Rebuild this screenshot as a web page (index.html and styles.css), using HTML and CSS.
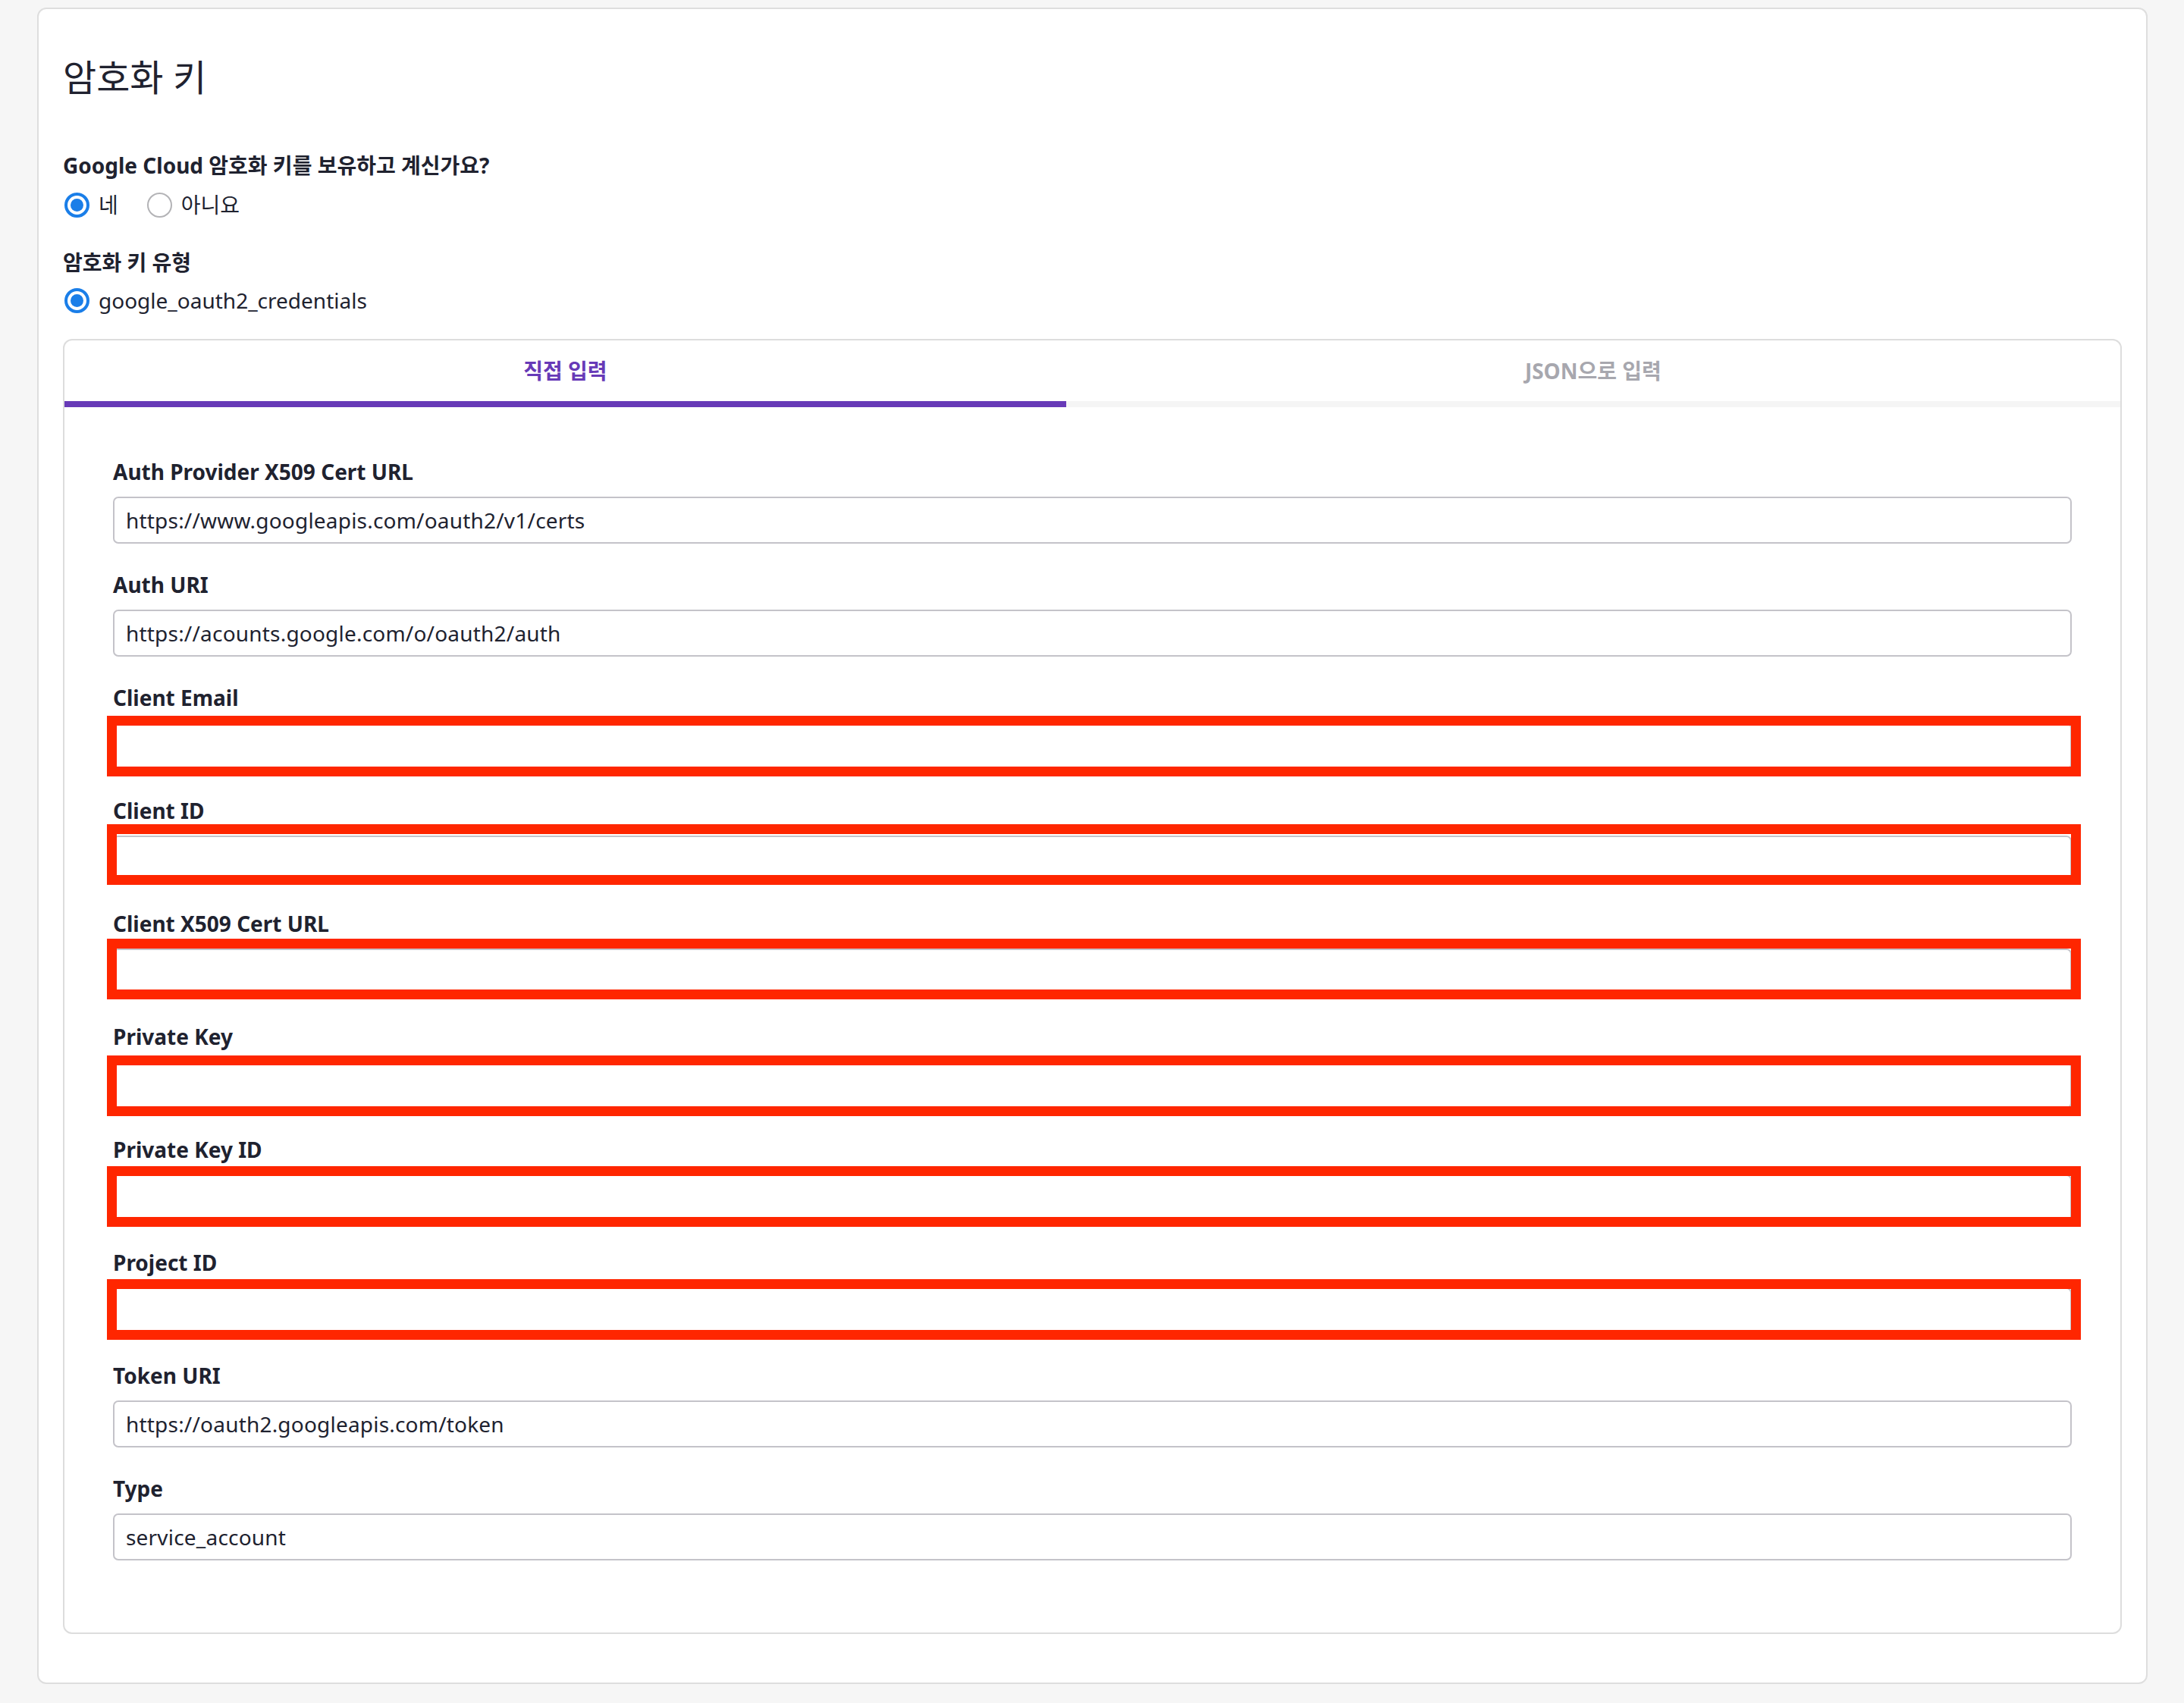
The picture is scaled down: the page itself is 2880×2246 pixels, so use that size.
FILE: index.html
```html
<!DOCTYPE html>
<html lang="ko">
<head>
<meta charset="utf-8">
<title>암호화 키</title>
<link rel="stylesheet" href="styles.css">
</head>
<body>
<div class="card">
  <h1 class="title">암호화 키</h1>

  <div class="group">
    <div class="group-label">Google Cloud 암호화 키를 보유하고 계신가요?</div>
    <div class="radio-row">
      <label class="radio"><span class="dot checked"></span><span>네</span></label>
      <label class="radio"><span class="dot"></span><span>아니요</span></label>
    </div>
  </div>

  <div class="group group-type">
    <div class="group-label">암호화 키 유형</div>
    <div class="radio-row">
      <label class="radio"><span class="dot checked"></span><span>google_oauth2_credentials</span></label>
    </div>
  </div>

  <div class="panel">
    <div class="tabs">
      <div class="tab active">직접 입력</div>
      <div class="tab">JSON으로 입력</div>
    </div>
    <div class="form">
      <div class="field">
        <div class="field-label">Auth Provider X509 Cert URL</div>
        <div class="input-wrap"><input class="input" type="text" value="https://www.googleapis.com/oauth2/v1/certs" readonly></div>
      </div>
      <div class="field">
        <div class="field-label">Auth URI</div>
        <div class="input-wrap"><input class="input" type="text" value="https://acounts.google.com/o/oauth2/auth" readonly></div>
      </div>
      <div class="field">
        <div class="field-label">Client Email</div>
        <div class="input-wrap"><input class="input" type="text" value="" readonly><span class="mark mark-a"></span></div>
      </div>
      <div class="field">
        <div class="field-label">Client ID</div>
        <div class="input-wrap"><input class="input" type="text" value="" readonly><span class="mark mark-b"></span></div>
      </div>
      <div class="field">
        <div class="field-label">Client X509 Cert URL</div>
        <div class="input-wrap"><input class="input" type="text" value="" readonly><span class="mark mark-c"></span></div>
      </div>
      <div class="field">
        <div class="field-label">Private Key</div>
        <div class="input-wrap"><input class="input" type="text" value="" readonly><span class="mark mark-d"></span></div>
      </div>
      <div class="field">
        <div class="field-label">Private Key ID</div>
        <div class="input-wrap"><input class="input" type="text" value="" readonly><span class="mark mark-e"></span></div>
      </div>
      <div class="field">
        <div class="field-label">Project ID</div>
        <div class="input-wrap"><input class="input" type="text" value="" readonly><span class="mark mark-e"></span></div>
      </div>
      <div class="field">
        <div class="field-label">Token URI</div>
        <div class="input-wrap"><input class="input" type="text" value="https://oauth2.googleapis.com/token" readonly></div>
      </div>
      <div class="field">
        <div class="field-label">Type</div>
        <div class="input-wrap"><input class="input" type="text" value="service_account" readonly></div>
      </div>
    </div>
  </div>
</div>
</body>
</html>
```

FILE: styles.css
```css
* { box-sizing: border-box; }

html, body {
  margin: 0;
  background: #f6f6f6;
}

body {
  padding: 10px 48px 27px 49px;
  font-family: "Noto Sans", "Noto Sans CJK KR", sans-serif;
  color: #20222f;
  font-size: 28px;
  line-height: 42px;
}

.card {
  background: #fff;
  border: 2px solid #dedede;
  border-radius: 12px;
  padding: 0 32px 64px 32px;
}

.title {
  margin: 57px 0 62px 0;
  font-size: 48px;
  line-height: 66px;
  font-weight: 400;
  color: #20222f;
}

.group-label {
  font-weight: 700;
  font-size: 28px;
  line-height: 42px;
}

.group {
  margin-bottom: 34px;
}

.group-type {
  margin-bottom: 30px;
}

.radio-row {
  display: flex;
  align-items: center;
  gap: 36px;
  margin-top: 10px;
  height: 42px;
}

.group-type .radio-row {
  margin-top: 8px;
}

.radio {
  display: flex;
  align-items: center;
  gap: 12px;
  font-size: 28px;
  line-height: 42px;
}

.dot {
  width: 33px;
  height: 33px;
  border-radius: 50%;
  border: 2.5px solid #b3b3b6;
  margin-left: 2px;
  display: flex;
  align-items: center;
  justify-content: center;
  flex: none;
}

.dot.checked {
  border: 4px solid #1a7ee8;
}

.dot.checked::after {
  content: "";
  width: 17px;
  height: 17px;
  border-radius: 50%;
  background: #1a7ee8;
}

.panel {
  border: 2px solid #dddddd;
  border-radius: 12px;
}

.tabs {
  display: flex;
}

.tab {
  flex: auto;
  height: 88px;
  padding: 0 20px;
  display: flex;
  align-items: center;
  justify-content: center;
  font-weight: 700;
  font-size: 28px;
  color: #a7a7ae;
  border-bottom: 8px solid #f5f5f5;
}

.tab.active {
  color: #673ab7;
  border-bottom-color: #673ab7;
}

.form {
  padding: 64px 64px 62px 64px;
}

.field {
  margin-bottom: 33px;
}

.field-label {
  font-weight: 700;
  font-size: 28px;
  line-height: 42px;
  margin-bottom: 12px;
}

.input-wrap {
  position: relative;
}

.input {
  display: block;
  width: 100%;
  height: 62px;
  border: 2px solid #c4c3c9;
  border-radius: 7px;
  padding: 0 15px;
  font-family: "Noto Sans", "Noto Sans CJK KR", sans-serif;
  font-size: 28px;
  letter-spacing: 0.2px;
  color: #20222f;
  background: #fff;
  outline: none;
}

.mark {
  position: absolute;
  left: -8px;
  right: -12px;
  top: -11px;
  height: 80px;
  border: 13px solid #ff2600;
  pointer-events: none;
}

.mark-a { top: -9px; }
.mark-b { top: -15px; }
.mark-c { top: -13px; }
.mark-d { top: -8px; }
.mark-e { top: -11px; }
```
